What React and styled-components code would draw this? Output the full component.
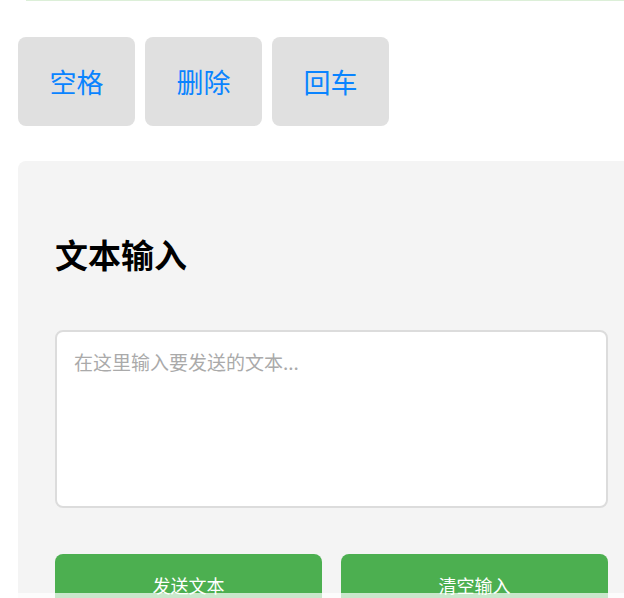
import React from "react";
import styled, { createGlobalStyle } from "styled-components";

const Global = createGlobalStyle`
  html, body { margin: 0; padding: 0; background: #ffffff; overflow: hidden; }
  body { font-family: "Noto Sans CJK SC", "Noto Sans", sans-serif; }
  * { box-sizing: border-box; }
`;

const Page = styled.div`
  width: 680px;
  padding: 0 0 0 18px;
  display: flex;
  flex-direction: column;
`;

const StatusEdge = styled.div`
  height: 1px;
  margin-left: 8px;
  background: #dcefd8;
`;

const KeyRow = styled.div`
  display: flex;
  gap: 10px;
  margin-top: 36px;
`;

const KeyButton = styled.button`
  width: 117px;
  height: 89px;
  border: none;
  border-radius: 8px;
  background: #e0e0e0;
  color: #0a84ff;
  font-family: "Noto Sans CJK SC", sans-serif;
  font-size: 27px;
  display: flex;
  align-items: center;
  justify-content: center;
  padding: 0;
`;

const Panel = styled.section`
  margin-top: 35px;
  width: 627px;
  background: #f4f4f4;
  border-radius: 8px;
  padding: 37px 37px 40px;
  display: flex;
  flex-direction: column;
`;

const Title = styled.h2`
  margin: 36px 0 0;
  font-size: 33px;
  line-height: 40px;
  font-weight: 700;
  color: #000;
`;

const TextArea = styled.textarea`
  margin-top: 56px;
  height: 178px;
  width: 100%;
  border: 2px solid #dcdcdc;
  border-radius: 8px;
  background: #fff;
  padding: 18px 17px;
  font-family: "Noto Sans CJK SC", sans-serif;
  font-size: 19px;
  line-height: 24px;
  resize: none;
  outline: none;
  &::placeholder { color: #aaaaaa; }
`;

const ActionRow = styled.div`
  margin-top: 46px;
  display: grid;
  grid-template-columns: 1fr 1fr;
  gap: 19px;
`;

const ActionButton = styled.button`
  height: 62px;
  border: none;
  border-radius: 8px;
  background: #4caf50;
  color: #fff;
  font-family: "Noto Sans CJK SC", sans-serif;
  font-size: 18px;
  display: flex;
  align-items: center;
  justify-content: center;
`;

const BottomFade = styled.div`
  position: fixed;
  left: 0;
  right: 0;
  bottom: 0;
  height: 5px;
  background: rgba(255, 255, 255, 0.7);
`;

export default function App() {
  return (
    <>
      <Global />
      <Page>
        <StatusEdge />
        <KeyRow>
          <KeyButton>空格</KeyButton>
          <KeyButton>删除</KeyButton>
          <KeyButton>回车</KeyButton>
        </KeyRow>
        <Panel>
          <Title>文本输入</Title>
          <TextArea placeholder="在这里输入要发送的文本..." />
          <ActionRow>
            <ActionButton>发送文本</ActionButton>
            <ActionButton>清空输入</ActionButton>
          </ActionRow>
        </Panel>
      </Page>
      <BottomFade />
    </>
  );
}
